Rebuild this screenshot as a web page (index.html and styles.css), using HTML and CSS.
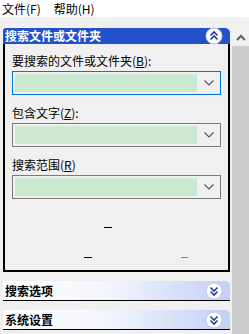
FILE: index.html
```html
<!DOCTYPE html>
<html>
<head>
<meta charset="utf-8">
<link rel="stylesheet" href="styles.css">
</head>
<body>
<div class="menubar">
  <span class="menu-item">文件(F)</span>
  <span class="menu-item">帮助(H)</span>
</div>
<div class="main">
  <div class="content">
    <section class="panel">
      <div class="panel-head">
        <span class="head-title">搜索文件或文件夹</span>
        <svg class="round-btn" width="18" height="18" viewBox="0 0 18 18"><circle cx="9" cy="9" r="8" fill="#fff" stroke="#b9c8ee" stroke-width="1"/><polyline points="5.5,8.5 9,5 12.5,8.5" fill="none" stroke="#1d3f9a" stroke-width="1.6"/><polyline points="5.5,12.5 9,9 12.5,12.5" fill="none" stroke="#1d3f9a" stroke-width="1.6"/></svg>
      </div>
      <div class="panel-body">
        <div class="label">要搜索的文件或文件夹(<u>B</u>):</div>
        <div class="combo focus"><div class="fill"></div><svg class="chev" width="10" height="6" viewBox="0 0 10 6"><polyline points="0.5,0.5 5,5 9.5,0.5" fill="none" stroke="#555" stroke-width="1.1"/></svg></div>
        <div class="label">包含文字(<u>Z</u>):</div>
        <div class="combo"><div class="fill"></div><svg class="chev" width="10" height="6" viewBox="0 0 10 6"><polyline points="0.5,0.5 5,5 9.5,0.5" fill="none" stroke="#555" stroke-width="1.1"/></svg></div>
        <div class="label">搜索范围(<u>R</u>)</div>
        <div class="combo"><div class="fill"></div><svg class="chev" width="10" height="6" viewBox="0 0 10 6"><polyline points="0.5,0.5 5,5 9.5,0.5" fill="none" stroke="#555" stroke-width="1.1"/></svg></div>
        <div class="dashes">
          <div class="dash-row one"><span class="dash"></span></div>
          <div class="dash-row two"><span class="dash"></span><span class="dash gray"></span></div>
        </div>
      </div>
    </section>
    <div class="bar">
      <span class="bar-title">搜索选项</span>
      <svg class="round-btn" width="18" height="18" viewBox="0 0 18 18"><circle cx="9" cy="9" r="8" fill="#fff" stroke="#b9c8ee" stroke-width="1"/><polyline points="5.5,5.5 9,9 12.5,5.5" fill="none" stroke="#1d3f9a" stroke-width="1.6"/><polyline points="5.5,9.5 9,13 12.5,9.5" fill="none" stroke="#1d3f9a" stroke-width="1.6"/></svg>
    </div>
    <div class="bar">
      <span class="bar-title">系统设置</span>
      <svg class="round-btn" width="18" height="18" viewBox="0 0 18 18"><circle cx="9" cy="9" r="8" fill="#fff" stroke="#b9c8ee" stroke-width="1"/><polyline points="5.5,5.5 9,9 12.5,5.5" fill="none" stroke="#1d3f9a" stroke-width="1.6"/><polyline points="5.5,9.5 9,13 12.5,9.5" fill="none" stroke="#1d3f9a" stroke-width="1.6"/></svg>
    </div>
  </div>
  <div class="scrollbar">
    <div class="scroll-up"><svg width="10" height="7" viewBox="0 0 10 7"><polyline points="1,6 5,2 9,6" fill="none" stroke="#606060" stroke-width="2"/></svg></div>
    <div class="thumb"></div>
  </div>
</div>
</body>
</html>
```

FILE: styles.css
```css
html, body {
  margin: 0;
  padding: 0;
}
body {
  width: 249px;
  height: 334px;
  overflow: hidden;
  background: #f0f0f0;
  font-family: "Noto Sans CJK SC", "Microsoft YaHei", sans-serif;
  font-size: 12px;
  color: #000;
}
.menubar {
  height: 17px;
  background: #fff;
  display: flex;
  align-items: center;
  padding-left: 2px;
  line-height: 17px;
}
.menu-item {
  margin-right: 13px;
}
.main {
  display: flex;
  padding-top: 11px;
  height: 306px;
}
.content {
  width: 227px;
  margin-left: 3px;
}
.panel-head {
  height: 16px;
  background: #2251c9;
  border-radius: 3px 5px 0 0;
  display: flex;
  align-items: center;
  justify-content: space-between;
  padding: 0 7px 0 2px;
  color: #fff;
  font-weight: bold;
  line-height: 16px;
}
.round-btn {
  display: block;
}
.panel-body {
  box-sizing: border-box;
  border: 2px solid #000;
  border-top: none;
  height: 228px;
  padding: 9px 7px 0 7px;
}
.label {
  height: 16px;
  line-height: 16px;
  margin-bottom: 2px;
}
.label u {
  text-underline-offset: 1px;
}
.combo {
  height: 24px;
  box-sizing: border-box;
  border: 1px solid #7a7a7a;
  display: flex;
  align-items: center;
  padding: 2px 6px 2px 2px;
  margin-bottom: 10px;
}
.combo.focus {
  border-color: #0078d7;
}
.fill {
  flex: 1;
  align-self: stretch;
  background: #cde8d0;
  margin-right: 7px;
}
.chev {
  display: block;
}
.dashes {
  padding-top: 18px;
}
.dash-row {
  display: flex;
  height: 30px;
  align-items: flex-start;
}
.dash {
  display: block;
  width: 8px;
  height: 1px;
  background: #000;
}
.dash-row.one .dash {
  margin-left: 92px;
}
.dash-row.two .dash {
  margin-left: 72px;
}
.dash-row.two .dash.gray {
  margin-left: 89px;
  width: 7px;
  background: #8a8a8a;
}
.bar {
  margin-top: 9px;
  height: 19px;
  border-bottom: 1px solid #000;
  border-radius: 0 5px 0 0;
  background: linear-gradient(to right, #ffffff 0%, #f4f6fd 45%, #c3cff5 100%);
  display: flex;
  align-items: center;
  justify-content: space-between;
  padding: 0 7px 0 2px;
  font-weight: bold;
  font-size: 12px;
}
.scrollbar {
  width: 17px;
  margin-left: 2px;
  display: flex;
  flex-direction: column;
}
.scroll-up {
  height: 18px;
  display: flex;
  align-items: center;
  justify-content: center;
}
.scroll-up svg {
  display: block;
}
.thumb {
  flex: 1;
  background: #cdcdcd;
}
```
